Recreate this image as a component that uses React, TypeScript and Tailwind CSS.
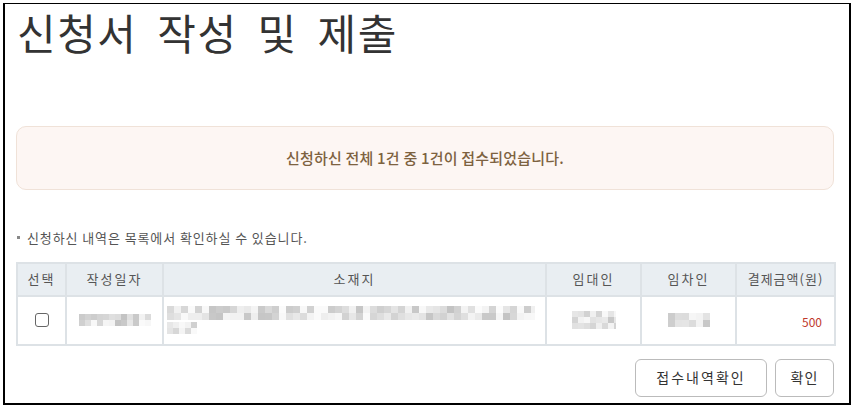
import React from "react";

const FONT = { fontFamily: '"Noto Sans CJK KR", "Noto Sans", sans-serif' };

function rand(seed: number) {
  let s = seed;
  return () => {
    s = (s * 9301 + 49297) % 233280;
    return s / 233280;
  };
}

function Mosaic({ w, h, seed, block = 6 }: { w: number; h: number; seed: number; block?: number }) {
  const r = rand(seed);
  const cols = Math.ceil(w / block);
  const rows = Math.ceil(h / block);
  const cells: string[] = [];
  for (let i = 0; i < cols * rows; i++) {
    const x = r();
    const v = x < 0.3 ? Math.floor(238 + r() * 14) : Math.floor(195 + r() * 40);
    cells.push(`rgb(${v},${v},${v})`);
  }
  return (
    <div
      className="grid"
      style={{ width: w, height: h, gridTemplateColumns: `repeat(${cols}, ${block}px)`, gridAutoRows: `${block}px`, overflow: "hidden" }}
    >
      {cells.map((c, i) => (
        <div key={i} style={{ backgroundColor: c }} />
      ))}
    </div>
  );
}

export default function App() {
  return (
    <div className="w-[853px] h-[408px] bg-white pt-[3px] pl-[3px]" style={FONT}>
      <div className="w-[848px] h-[402px] border-t border-l-2 border-r-2 border-b-2 border-black pl-[11px] pr-[15px]">
        <h1 className="text-[42px] leading-[40px] text-[#333] mt-[8px] ml-[1px] tracking-[1.5px] [word-spacing:9px] font-normal">
          신청서 작성 및 제출
        </h1>
        <div className="mt-[74px] h-[64px] rounded-[10px] border border-[#f0e2d8] bg-[#fdf6f3] flex items-center justify-center">
          <span className="text-[15px] font-medium text-[#7d6240] tracking-[0.2px]">
            신청하신 전체 1건 중 1건이 접수되었습니다.
          </span>
        </div>
        <div className="mt-[38px] flex items-center text-[13px] text-[#555] tracking-[0.9px]">
          <span className="w-[3px] h-[3px] bg-[#888] ml-[1px] mr-[7px]" />
          신청하신 내역은 목록에서 확인하실 수 있습니다.
        </div>
        <table className="mt-[14px] w-[818px] border-collapse text-[13px] table-fixed">
          <colgroup>
            <col className="w-[49px]" />
            <col className="w-[97px]" />
            <col className="w-[383px]" />
            <col className="w-[95px]" />
            <col className="w-[95px]" />
            <col className="w-[99px]" />
          </colgroup>
          <thead>
            <tr className="h-[33px] bg-[#e9eef2] text-[#555]">
              <th className="border-2 border-[#dde2e6] font-normal tracking-[2px]">선택</th>
              <th className="border-2 border-[#dde2e6] font-normal tracking-[2px]">작성일자</th>
              <th className="border-2 border-[#dde2e6] font-normal tracking-[2px]">소재지</th>
              <th className="border-2 border-[#dde2e6] font-normal tracking-[2px]">임대인</th>
              <th className="border-2 border-[#dde2e6] font-normal tracking-[2px]">임차인</th>
              <th className="border-2 border-[#dde2e6] font-normal tracking-[1px]">결제금액(원)</th>
            </tr>
          </thead>
          <tbody>
            <tr className="h-[49px]">
              <td className="border-2 border-[#dde2e6]">
                <div className="flex justify-center">
                  <span className="w-[14px] h-[14px] rounded-[3px] border border-[#666] bg-white" />
                </div>
              </td>
              <td className="border-2 border-[#dde2e6]">
                <div className="flex justify-center">
                  <Mosaic w={72} h={12} seed={3} block={6} />
                </div>
              </td>
              <td className="border-2 border-[#dde2e6] px-[2px]">
                <div className="flex flex-col gap-[2px] ml-[1px]">
                  <Mosaic w={368} h={14} seed={7} block={7} />
                  <Mosaic w={30} h={12} seed={11} block={6} />
                </div>
              </td>
              <td className="border-2 border-[#dde2e6]">
                <div className="flex justify-center">
                  <Mosaic w={44} h={18} seed={5} block={6} />
                </div>
              </td>
              <td className="border-2 border-[#dde2e6]">
                <div className="flex justify-center">
                  <Mosaic w={42} h={14} seed={9} block={7} />
                </div>
              </td>
              <td className="border-2 border-[#dde2e6] text-right pr-[12px] pt-[4px] text-[#c0392b] text-[12px]">
                500
              </td>
            </tr>
          </tbody>
        </table>
        <div className="mt-[13px] flex justify-end gap-[8px]">
          <button className="w-[132px] h-[38px] rounded-[6px] border border-[#bbb] bg-white text-[14px] text-[#333] tracking-[2px]">
            접수내역확인
          </button>
          <button className="w-[59px] h-[38px] rounded-[6px] border border-[#bbb] bg-white text-[14px] text-[#333] tracking-[1px]">
            확인
          </button>
        </div>
      </div>
    </div>
  );
}
